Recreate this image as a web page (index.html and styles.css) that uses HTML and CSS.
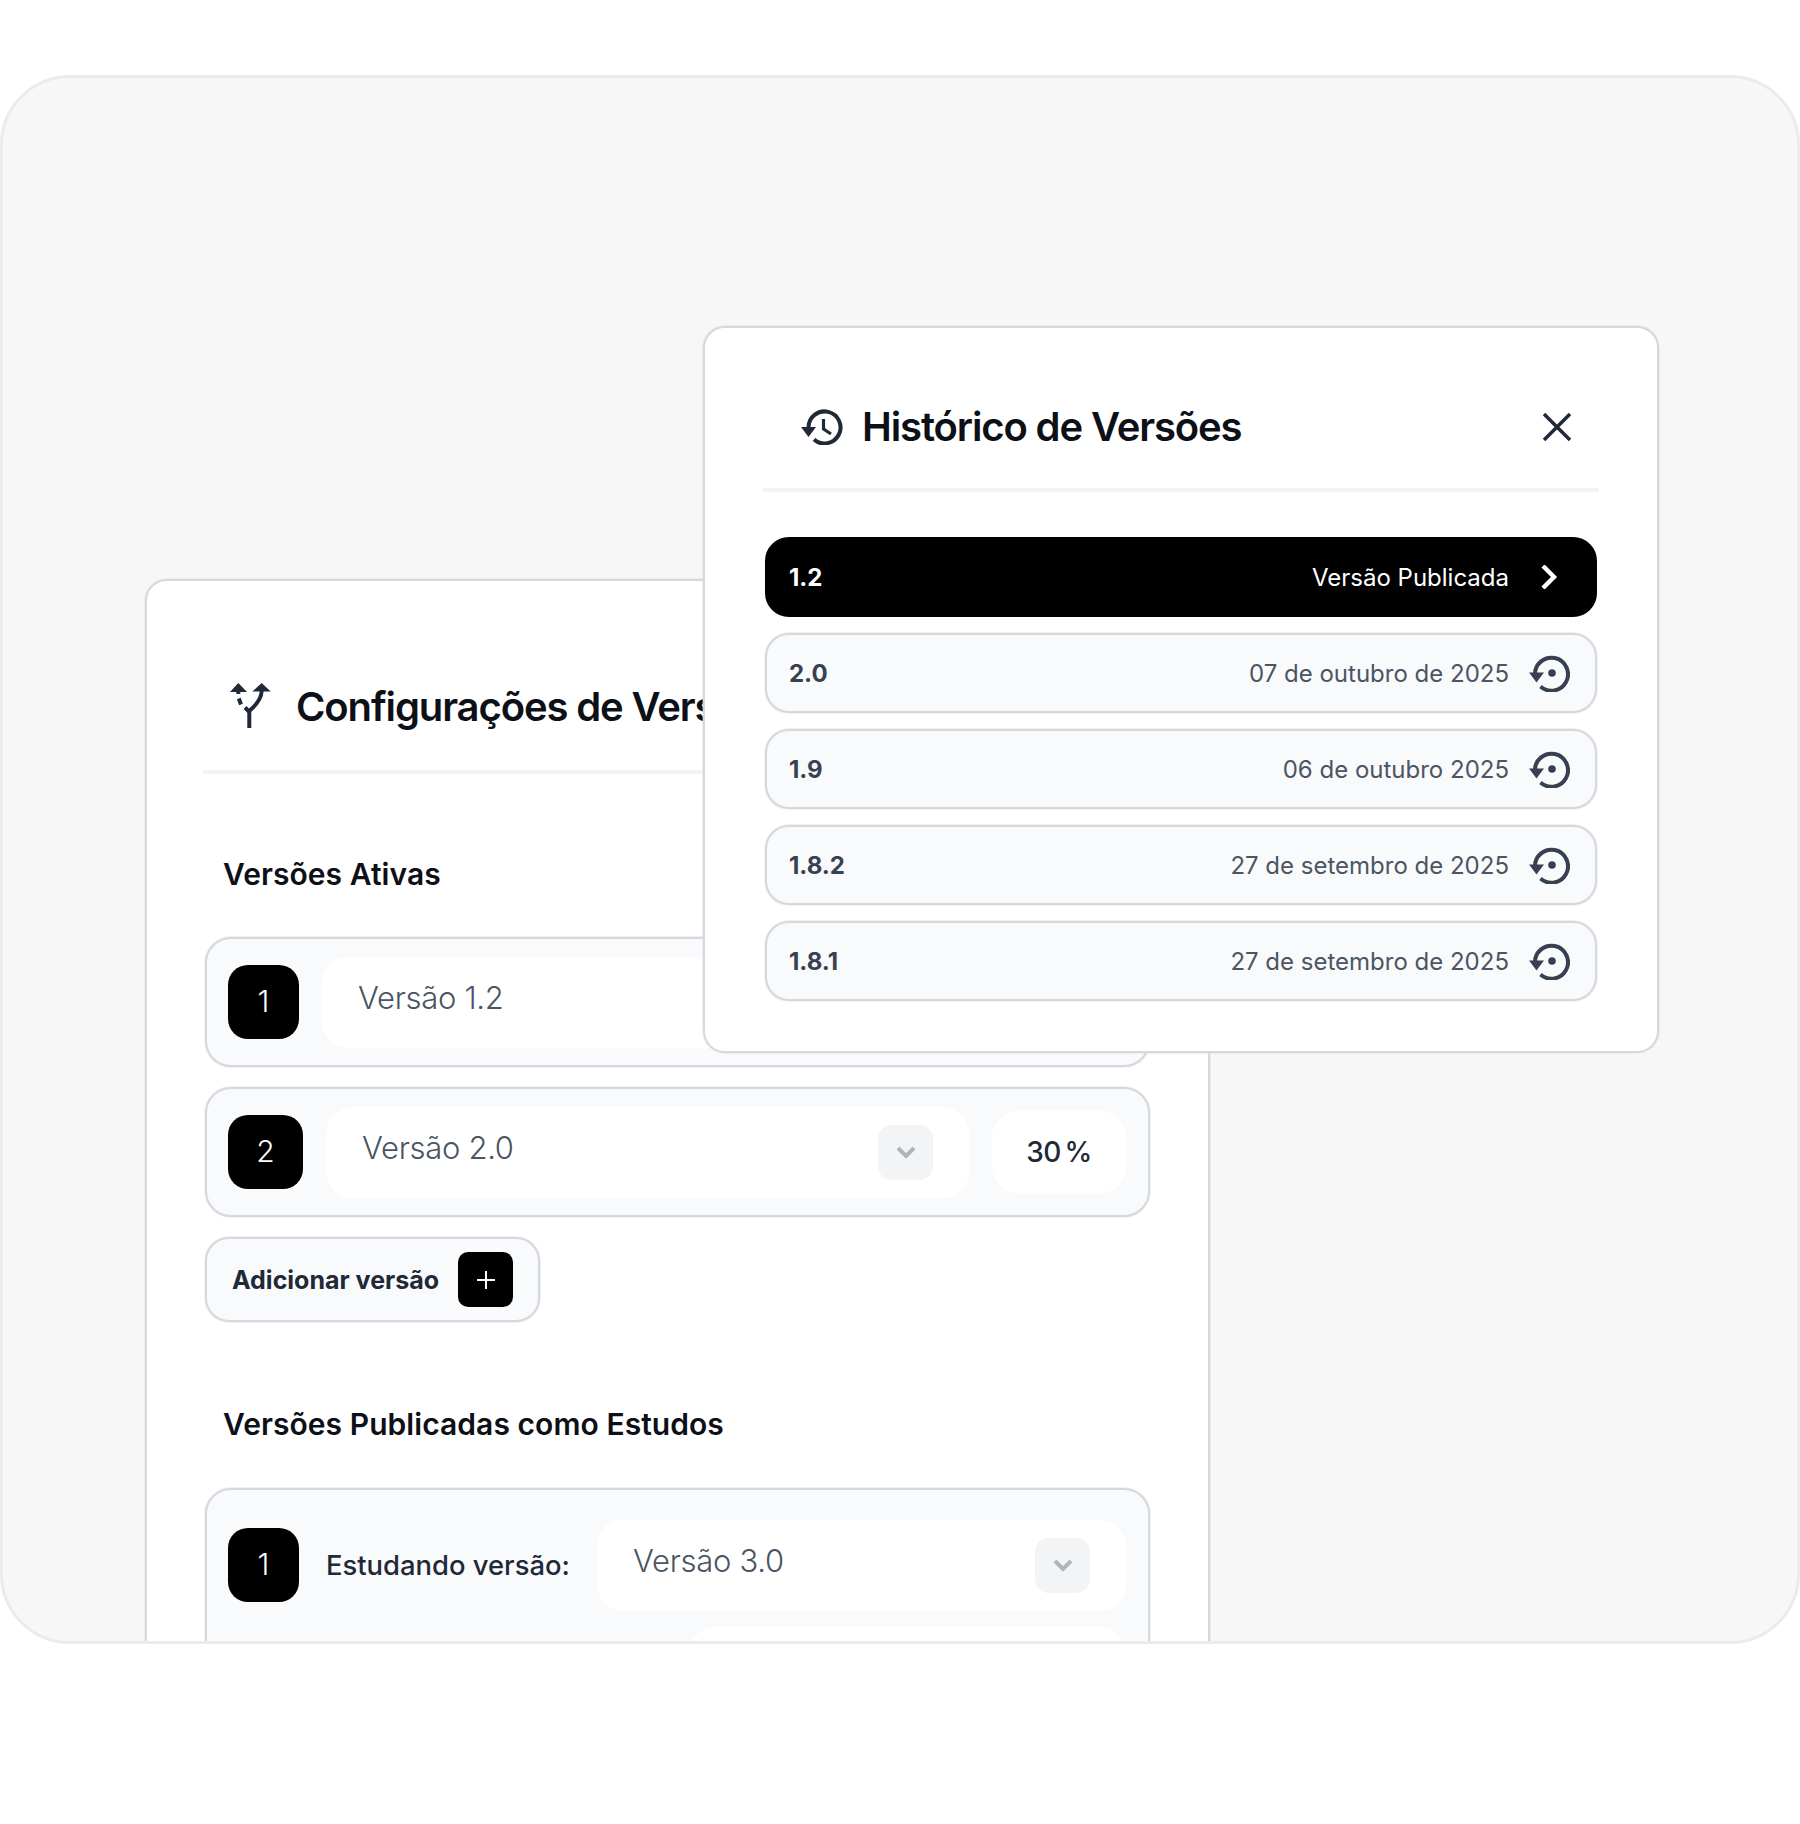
FILE: index.html
```html
<!doctype html>
<html lang="pt-BR">
  <head>
    <meta charset="utf-8">
    <title>Versões</title>
    <link rel="stylesheet" href="styles.css">
  </head>
  <body>
    <div class="stage">

      <section class="window window-config">
        <header class="window-head head-config">
          <svg class="icon-split" width="41" height="45" viewBox="0 0 41 45">
            <path class="fill" d="M0 9 8.300 0 17 9zM22.300 8.500 31.700 0l9 8.500z"/>
            <path class="line" d="M19.300 45V29c0-3 11.700-8 12.400-21"/>
            <path class="line" d="M8.300 8v3M8.800 15.500l2.200 6M15 24.500l4 4"/>
          </svg>
          <h1>Configurações de Versões</h1>
        </header>

        <h2>Versões Ativas</h2>

        <div class="row">
          <span class="badge badge-narrow">1</span>
          <div class="field">
            <span>Versão 1.2</span>
            <span class="drop"><svg width="20" height="13" viewBox="0 0 20 13"><path d="m2 2 8 8 8-8"/></svg></span>
          </div>
        </div>

        <div class="row">
          <span class="badge">2</span>
          <div class="field">
            <span>Versão 2.0</span>
            <span class="drop"><svg width="20" height="13" viewBox="0 0 20 13"><path d="m2 2 8 8 8-8"/></svg></span>
          </div>
          <span class="percent">30 %</span>
        </div>

        <button class="add">
          Adicionar versão
          <span class="add-box"><svg width="18" height="18" viewBox="0 0 18 18"><path d="M9 0v18M0 9h18"/></svg></span>
        </button>

        <h2 class="study-title">Versões Publicadas como Estudos</h2>

        <div class="row row-study">
          <span class="badge badge-narrow">1</span>
          <span class="study-label">Estudando versão:</span>
          <div class="field">
            <span>Versão 3.0</span>
            <span class="drop"><svg width="20" height="13" viewBox="0 0 20 13"><path d="m2 2 8 8 8-8"/></svg></span>
          </div>
          <div class="field field-extra"></div>
        </div>
      </section>

      <section class="window window-history">
        <header class="window-head head-history">
          <svg class="icon-history" width="42" height="36" viewBox="0 0 42 36">
            <path class="line" d="M7.500 18.500A16 16 0 1 1 13 30.500"/>
            <path class="fill" d="M0 18h15l-7.500 10z"/>
            <path class="line thin" d="M22.500 10v10l7.500 5"/>
          </svg>
          <h1>Histórico de Versões</h1>
          <svg class="icon-close" width="30" height="28" viewBox="0 0 30 28"><path d="m2 1 26 26M28 1 2 27"/></svg>
        </header>

        <ul class="versions">
          <li class="version version-current">
            <b>1.2</b>
            <span class="version-date">Versão Publicada</span>
            <svg class="icon-next" width="41" height="24" viewBox="0 0 41 24"><path d="m14 1 11 11-11 11"/></svg>
          </li>
          <li class="version">
            <b>2.0</b>
            <span class="version-date">07 de outubro de 2025</span>
            <svg class="icon-restore" width="41" height="37" viewBox="0 0 41 37"><path class="line" d="M6 20A16.500 16.500 0 1 1 11.500 31.500"/><path class="fill" d="M0 17.500h15l-7.500 10z"/><circle class="fill" cx="23" cy="18" r="3.800"/></svg>
          </li>
          <li class="version">
            <b>1.9</b>
            <span class="version-date">06 de outubro 2025</span>
            <svg class="icon-restore" width="41" height="37" viewBox="0 0 41 37"><path class="line" d="M6 20A16.500 16.500 0 1 1 11.500 31.500"/><path class="fill" d="M0 17.500h15l-7.500 10z"/><circle class="fill" cx="23" cy="18" r="3.800"/></svg>
          </li>
          <li class="version">
            <b>1.8.2</b>
            <span class="version-date">27 de setembro de 2025</span>
            <svg class="icon-restore" width="41" height="37" viewBox="0 0 41 37"><path class="line" d="M6 20A16.500 16.500 0 1 1 11.500 31.500"/><path class="fill" d="M0 17.500h15l-7.500 10z"/><circle class="fill" cx="23" cy="18" r="3.800"/></svg>
          </li>
          <li class="version">
            <b>1.8.1</b>
            <span class="version-date">27 de setembro de 2025</span>
            <svg class="icon-restore" width="41" height="37" viewBox="0 0 41 37"><path class="line" d="M6 20A16.500 16.500 0 1 1 11.500 31.500"/><path class="fill" d="M0 17.500h15l-7.500 10z"/><circle class="fill" cx="23" cy="18" r="3.800"/></svg>
          </li>
        </ul>
      </section>

    </div>
  </body>
</html>
```

FILE: styles.css
```css
html { background: #fff; }
body { margin: 0; font-family: "Inter", sans-serif; color: #0d1117; }
h1, h2, ul { margin: 0; padding: 0; }

.stage {
  position: relative;
  height: 1569px;
  margin-top: 75px;
  background: #f7f7f7;
  border: 3px solid #ebebec;
  border-radius: 70px;
  box-sizing: border-box;
  overflow: hidden;
}

/* the two windows float on the stage */
.window {
  position: absolute;
  box-sizing: border-box;
  background: #fff;
  border: 2px solid #d5d8dd;
  box-shadow: 0 0 0 1px rgba(213, 216, 221, .35);
  border-radius: 22px;
}
.window-config {
  left: 142px;
  top: 501px;
  width: 1065px;
  height: 1200px;
  padding: 0 58px;
}
.window-history {
  left: 700px;
  top: 248px;
  width: 956px;
  height: 727px;
  padding: 0 60px;
}

.window-head {
  display: flex;
  align-items: center;
  margin: 0 -2px;
  border-bottom: 4px solid #f3f3f4;
}
.window-head h1 {
  font-size: 40px;
  line-height: 60px;
  font-weight: 590;
  letter-spacing: -0.028em;
  white-space: nowrap;
}
.head-config { padding: 96px 0 33px 27px; }
.head-history { padding: 69px 27px 31px 38px; }

.icon-split { margin: 0 25px 4px 0; flex: none; overflow: visible; }
.icon-history { margin-right: 19px; flex: none; }
.icon-close { margin-left: auto; fill: none; stroke: #1f2937; stroke-width: 3.5; }

.window svg .fill { fill: #1f2937; stroke: none; }
.window svg .line { fill: none; stroke: #1f2937; stroke-width: 4; }
.window svg .line.thin { stroke-width: 3.2; }

h2 {
  font-size: 30px;
  line-height: 40px;
  font-weight: 600;
  letter-spacing: 0.002em;
  margin: 80px 0 43px 18px;
}
.study-title { margin: 82px 0 44px 18px; }

.row {
  display: flex;
  align-items: center;
  gap: 23px;
  box-sizing: border-box;
  height: 130px;
  margin-bottom: 20px;
  padding: 0 22px 0 21px;
  background: #f9fafb;
  border: 2px solid #d5d8dd;
  box-shadow: 0 0 0 1px rgba(213, 216, 221, .35);
  border-radius: 26px;
}
.badge {
  flex: none;
  display: flex;
  align-items: center;
  justify-content: center;
  box-sizing: border-box;
  width: 75px;
  height: 74px;
  padding-bottom: 2px;
  background: #000;
  color: #fff;
  border-radius: 20px;
  font-size: 30px;
  font-weight: 300;
}
.badge-narrow { width: 71px; }

.field {
  flex: 1;
  display: flex;
  align-items: center;
  justify-content: space-between;
  box-sizing: border-box;
  height: 91px;
  padding: 0 36px;
  background: #fff;
  border-radius: 26px;
  font-size: 31px;
  font-weight: 300;
  letter-spacing: -0.3px;
  color: #4b5563;
}
.field > span:first-child { padding-bottom: 10px; }
.drop {
  display: flex;
  align-items: center;
  justify-content: center;
  width: 55px;
  height: 55px;
  background: #f3f4f5;
  border-radius: 14px;
}
.drop svg { fill: none; stroke: #b1b4ba; stroke-width: 4; }

.percent {
  flex: none;
  display: flex;
  align-items: center;
  justify-content: center;
  width: 134px;
  height: 82px;
  background: #fff;
  border-radius: 26px;
  font-size: 28px;
  font-weight: 500;
  letter-spacing: -0.6px;
  word-spacing: -3px;
  color: #1f2937;
}

.add {
  display: flex;
  align-items: center;
  justify-content: space-between;
  box-sizing: border-box;
  width: 335px;
  height: 85px;
  padding: 0 25px;
  background: #f9fafb;
  border: 2px solid #d5d8dd;
  box-shadow: 0 0 0 1px rgba(213, 216, 221, .35);
  border-radius: 24px;
  font: 700 25px "Inter", sans-serif;
  color: #1f2937;
}
.add-box {
  display: flex;
  align-items: center;
  justify-content: center;
  width: 55px;
  height: 55px;
  background: #000;
  border-radius: 10px;
}
.add-box svg { fill: none; stroke: #fff; stroke-width: 2; }

.row-study {
  display: grid;
  grid-template-columns: 71px 244px 1fr;
  align-items: start;
  align-content: start;
  height: 300px;
  gap: 16px 27px;
  padding-top: 30px;
}
.row-study .badge { margin-top: 8px; }
.study-label {
  margin-top: 25px;
  font-size: 27.400px;
  font-weight: 500;
  line-height: 40px;
  white-space: nowrap;
  color: #1f2937;
}
.field-extra { grid-column: 1 / -1; justify-self: end; width: 437px; }

.versions { list-style: none; margin-top: 45px; }
.version {
  display: flex;
  align-items: center;
  box-sizing: border-box;
  height: 80px;
  margin-bottom: 16px;
  padding: 0 25px 0 22px;
  background: #f9fafb;
  border: 2px solid #d5d8dd;
  box-shadow: 0 0 0 1px rgba(213, 216, 221, .35);
  border-radius: 24px;
  color: #374151;
}
.version b { font-size: 24px; font-weight: 700; }
.version-date {
  margin-left: auto;
  margin-right: 20px;
  font-size: 24px;
  color: #4b5563;
}
.version-current { background: #000; border-color: #000; box-shadow: none; color: #fff; }
.version-current .version-date { color: #fff; }
.icon-next { fill: none; stroke: #fff; stroke-width: 4.4; }
.icon-restore .line { stroke: #374151 !important; }
.icon-restore .fill { fill: #374151 !important; }
```
